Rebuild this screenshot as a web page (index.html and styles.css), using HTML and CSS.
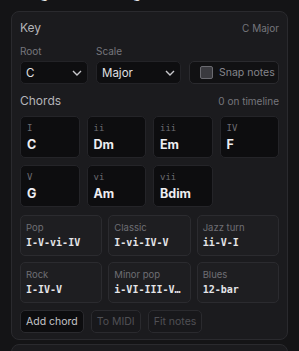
FILE: index.html
```html
<!DOCTYPE html>
<html lang="en">
<head>
    <meta charset="UTF-8">
    <meta name="viewport" content="width=device-width, initial-scale=1.0">
    <title>Key &amp; Chords</title>
    <link rel="stylesheet" href="styles.css">
</head>
<body>
    <div class="page">
        <h2 class="page-title">Progression settings</h2>

        <div class="card">
            <div class="row-head">
                <span class="head-title">Key</span>
                <span class="head-note">C Major</span>
            </div>

            <div class="key-fields">
                <div class="field field-root">
                    <label>Root</label>
                    <div class="select">
                        <span>C</span>
                        <svg width="10" height="6" viewBox="0 0 10 6"><path d="M1 1l4 4 4-4" fill="none" stroke="#c8c8cc" stroke-width="1.4"/></svg>
                    </div>
                </div>
                <div class="field field-scale">
                    <label>Scale</label>
                    <div class="select">
                        <span>Major</span>
                        <svg width="10" height="6" viewBox="0 0 10 6"><path d="M1 1l4 4 4-4" fill="none" stroke="#c8c8cc" stroke-width="1.4"/></svg>
                    </div>
                </div>
                <div class="snap">
                    <span class="checkbox"></span>
                    <span>Snap notes</span>
                </div>
            </div>

            <div class="row-head chords-head">
                <span class="head-title">Chords</span>
                <span class="head-note">0 on timeline</span>
            </div>

            <div class="chord-grid" id="chordGrid">
                <!-- filled by script -->
            </div>

            <div class="prog-grid" id="progGrid">
                <!-- filled by script -->
            </div>

            <div class="actions">
                <button class="btn">Add chord</button>
                <button class="btn" disabled>To MIDI</button>
                <button class="btn" disabled>Fit notes</button>
            </div>
        </div>

        <div class="card card-next"></div>
    </div>

    <script>
        // Diatonic chords of C major
        const chords = [
            { degree: 'I', name: 'C' },
            { degree: 'ii', name: 'Dm' },
            { degree: 'iii', name: 'Em' },
            { degree: 'IV', name: 'F' },
            { degree: 'V', name: 'G' },
            { degree: 'vi', name: 'Am' },
            { degree: 'vii', name: 'Bdim' }
        ];

        const progressions = [
            { label: 'Pop', steps: 'I-V-vi-IV' },
            { label: 'Classic', steps: 'I-vi-IV-V' },
            { label: 'Jazz turn', steps: 'ii-V-I' },
            { label: 'Rock', steps: 'I-IV-V' },
            { label: 'Minor pop', steps: 'i-VI-III-VII' },
            { label: 'Blues', steps: '12-bar' }
        ];

        const chordGrid = document.getElementById('chordGrid');
        chords.forEach(chord => {
            const cell = document.createElement('div');
            cell.className = 'chord';
            cell.innerHTML = `<span class="chord-degree">${chord.degree}</span><span class="chord-name">${chord.name}</span>`;
            chordGrid.appendChild(cell);
        });

        const progGrid = document.getElementById('progGrid');
        progressions.forEach(prog => {
            const cell = document.createElement('div');
            cell.className = 'prog';
            cell.innerHTML = `<span class="prog-label">${prog.label}</span><span class="prog-steps">${prog.steps}</span>`;
            progGrid.appendChild(cell);
        });
    </script>
</body>
</html>
```

FILE: styles.css
```css
body {
    margin: 0;
    background: #141416;
    color: #d8d8dc;
    font-family: 'Inter', 'Liberation Sans', sans-serif;
    overflow: hidden;
}

.page {
    padding: 0 11px;
}

.page-title {
    margin: -15px 0 10px;
    height: 16px;
    font-size: 13px;
    font-weight: 600;
    color: #e4e4e8;
    padding-left: 8px;
    line-height: 16px;
}

.card {
    background: #1b1b1e;
    border: 1px solid #2a2a2e;
    border-radius: 8px;
    padding: 8px 8px 6px;
}

.card-next {
    margin-top: 4px;
    height: 40px;
}

.row-head {
    display: flex;
    justify-content: space-between;
    align-items: baseline;
    height: 16px;
    line-height: 16px;
}

.head-title {
    font-size: 12px;
    color: #b4b4b8;
}

.head-note {
    font-size: 10px;
    color: #76767c;
}

.key-fields {
    display: flex;
    gap: 8px;
    align-items: flex-end;
    margin-top: 8px;
}

.field {
    display: flex;
    flex-direction: column;
    gap: 3px;
}

.field label {
    font-size: 10px;
    line-height: 14px;
    color: #76767c;
}

.field-root {
    width: 68px;
}

.field-scale {
    width: 85px;
}

.select {
    height: 23px;
    box-sizing: border-box;
    background: #0e0e10;
    border: 1px solid #232327;
    border-radius: 5px;
    display: flex;
    align-items: center;
    justify-content: space-between;
    padding: 0 5px;
    font-size: 11.5px;
    color: #e0e0e4;
}

.snap {
    flex: 1;
    height: 23px;
    box-sizing: border-box;
    background: #111113;
    border: 1px solid #2a2a2e;
    border-radius: 5px;
    display: flex;
    align-items: center;
    gap: 6px;
    padding-left: 10px;
    font-size: 10.5px;
    color: #85858b;
}

.checkbox {
    width: 11px;
    height: 11px;
    border: 1px solid #6a6a70;
    border-radius: 2px;
    background: #3a3a3f;
}

.chords-head {
    margin-top: 9px;
}

.chord-grid {
    display: grid;
    grid-template-columns: repeat(4, 1fr);
    gap: 7px;
    margin-top: 7px;
}

.chord {
    height: 42px;
    box-sizing: border-box;
    background: #0d0d0f;
    border: 1px solid #242428;
    border-radius: 5px;
    padding: 5px 6px;
    display: flex;
    flex-direction: column;
    gap: 3px;
}

.chord-degree {
    font-family: 'DejaVu Sans Mono', monospace;
    font-size: 9px;
    line-height: 12px;
    color: #6c6c72;
}

.chord-name {
    font-size: 12.5px;
    font-weight: 700;
    line-height: 15px;
    color: #eeeef2;
}

.prog-grid {
    display: grid;
    grid-template-columns: repeat(3, 1fr);
    gap: 6px;
    margin-top: 8px;
}

.prog {
    height: 41px;
    box-sizing: border-box;
    background: #1e1e21;
    border: 1px solid #2b2b2f;
    border-radius: 5px;
    padding: 6px 5px;
    display: flex;
    flex-direction: column;
    gap: 2px;
    min-width: 0;
}

.prog-label {
    font-size: 9.5px;
    line-height: 12px;
    color: #6e6e74;
}

.prog-steps {
    font-family: 'DejaVu Sans Mono', monospace;
    font-size: 10px;
    font-weight: 700;
    line-height: 14px;
    color: #e4e4e8;
    white-space: nowrap;
    overflow: hidden;
    text-overflow: ellipsis;
}

.actions {
    display: flex;
    gap: 7px;
    margin-top: 7px;
}

.btn {
    height: 23px;
    padding: 0 5px;
    background: #0d0d0f;
    border: 1px solid #2a2a2e;
    border-radius: 5px;
    font-family: 'Inter', 'Liberation Sans', sans-serif;
    font-size: 10.5px;
    color: #c4c4c8;
    cursor: pointer;
}

.btn:disabled {
    background: #18181b;
    color: #505055;
    cursor: default;
}
```
